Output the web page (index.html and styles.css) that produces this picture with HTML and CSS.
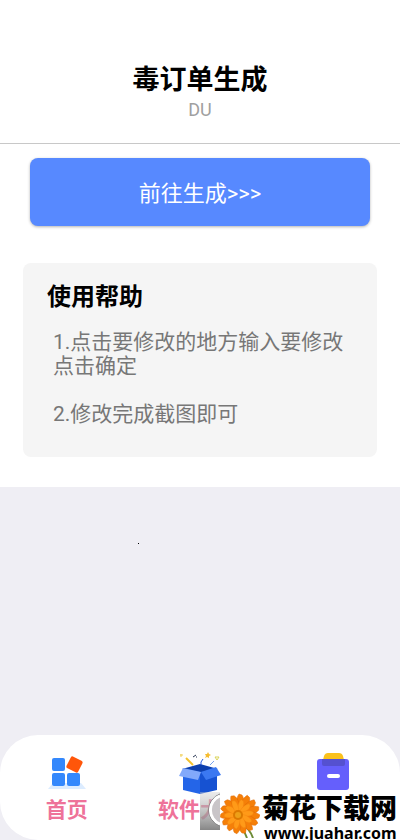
FILE: index.html
```html
<!DOCTYPE html>
<html lang="zh-CN">
<head>
  <meta charset="UTF-8">
  <meta name="viewport" content="width=device-width, initial-scale=1.0">
  <title>毒订单生成</title>
  <link rel="stylesheet" href="styles.css">
</head>
<body>
  <div class="app">
    <header class="header">
      <h1 class="title">毒订单生成</h1>
      <p class="subtitle">DU</p>
    </header>

    <main class="content">
      <button class="go-btn" type="button">前往生成&gt;&gt;&gt;</button>

      <!-- Help card -->
      <section class="help">
        <h2 class="help-title">使用帮助</h2>
        <div class="help-text">
          <p>1.点击要修改的地方输入要修改点击确定</p>
          <p>2.修改完成截图即可</p>
        </div>
      </section>
    </main>

    <div class="filler">
      <span class="dot"></span>
    </div>

    <!-- Tab bar -->
    <nav class="tabbar">
      <a class="tab" href="#home">
        <svg class="tab-icon" viewBox="0 0 44 44" aria-hidden="true">
          <path d="M8 33h28l5 6H3z" fill="#dcecff"/>
          <rect x="7" y="8" width="13" height="13" rx="2" fill="#3488fc"/>
          <rect x="7" y="23" width="13" height="13" rx="2" fill="#3488fc"/>
          <rect x="22" y="23" width="13" height="13" rx="2" fill="#3488fc"/>
          <rect x="23" y="8" width="13" height="13" rx="2" fill="#ff560a" transform="rotate(27 29.5 14.5)"/>
        </svg>
        <span class="tab-label">首页</span>
      </a>
      <a class="tab" href="#apps">
        <svg class="tab-icon" viewBox="0 0 44 44" aria-hidden="true">
          <path d="M4 19L22 14L40 19L22 23z" fill="#0d3fae"/>
          <path d="M5 19L22 22V44L5 40z" fill="#2465e8"/>
          <path d="M22 22L39 19V40L22 44z" fill="#1652d2"/>
          <path d="M5 18L23 22L20 30L1 26z" fill="#82a9fb"/>
          <path d="M23 22L38 17L43 25L28 30z" fill="#3b78f1"/>
          <path d="M8 8l7 7" stroke="#f2c12e" stroke-width="2"/>
          <path d="M2 5h3M3 4v3" stroke="#f0cf58" stroke-width="1"/>
          <path d="M15 7l3-2M18 7h1" stroke="#283552" stroke-width="1"/>
          <path d="M23 15q-1-3 2-6" stroke="#275be0" stroke-width="1" fill="none"/>
          <path d="M32 15l4-4" stroke="#77a2ee" stroke-width="1"/>
          <path d="M30 2l1 2 2 1-2 1v2l-2-1-2 1 1-2-1-2h2z" fill="#f6bd31"/>
          <path d="M37 7l2 3 2-3z" fill="none" stroke="#d9d45b"/>
        </svg>
        <span class="tab-label">软件大全</span>
      </a>
      <a class="tab" href="#mine" aria-label="我的">
        <svg class="tab-icon" viewBox="0 0 44 44" aria-hidden="true">
          <path d="M12 10l1-4q1-3 4-3h11q3 0 4 3l1 4z" fill="#fac11c"/>
          <rect x="6" y="9" width="32" height="31" rx="3" fill="#655ffc"/>
          <path d="M11 9h23v5q0 2-2 2H13q-2 0-2-2z" fill="#5551d0"/>
          <rect x="16" y="24" width="13" height="4" rx="2" fill="#fff"/>
        </svg>
      </a>
    </nav>

    <!-- Site mark over the tab bar -->
    <div class="mark">
      <svg class="mark-shade" viewBox="0 0 20 38" aria-hidden="true">
        <defs>
          <linearGradient id="shade" x1="0" y1="0" x2="0" y2="1">
            <stop offset="0" stop-color="#ccc" stop-opacity=".4"/>
            <stop offset="1" stop-color="#808080" stop-opacity=".95"/>
          </linearGradient>
        </defs>
        <rect width="20" height="38" fill="url(#shade)"/>
        <path d="M20 2A17 17 0 0 0 20 34" fill="#c9c5c8" stroke="#777" stroke-width="1"/>
        <path d="M20 4A15 15 0 0 0 20 32" fill="none" stroke="#fff" stroke-width="3"/>
      </svg>
      <svg class="mark-flower" viewBox="0 0 40 46" aria-hidden="true">
        <path d="M22 32q8 5 11 14M20 32q4 6 7 14" fill="none" stroke="#6d8c37" stroke-width="2"/>
        <defs>
          <path id="petal" d="M20 22C15 15 16 6 19 2L22 3C25 7 24 15 20 22z"/>
        </defs>
        <g fill="#f57f08" stroke="#e06a04" stroke-width=".5">
          <use href="#petal"/>
          <use href="#petal" transform="rotate(24 20 22)"/>
          <use href="#petal" transform="rotate(48 20 22)"/>
          <use href="#petal" transform="rotate(72 20 22)"/>
          <use href="#petal" transform="rotate(96 20 22)"/>
          <use href="#petal" transform="rotate(120 20 22)"/>
          <use href="#petal" transform="rotate(144 20 22)"/>
          <use href="#petal" transform="rotate(168 20 22)"/>
          <use href="#petal" transform="rotate(192 20 22)"/>
          <use href="#petal" transform="rotate(216 20 22)"/>
          <use href="#petal" transform="rotate(240 20 22)"/>
          <use href="#petal" transform="rotate(264 20 22)"/>
          <use href="#petal" transform="rotate(288 20 22)"/>
          <use href="#petal" transform="rotate(312 20 22)"/>
          <use href="#petal" transform="rotate(336 20 22)"/>
        </g>
        <g fill="#ff9a18" stroke="#f0820f" stroke-width=".5" transform="translate(4 6) scale(.74)">
          <use href="#petal" transform="rotate(12 20 22)"/>
          <use href="#petal" transform="rotate(48 20 22)"/>
          <use href="#petal" transform="rotate(84 20 22)"/>
          <use href="#petal" transform="rotate(120 20 22)"/>
          <use href="#petal" transform="rotate(156 20 22)"/>
          <use href="#petal" transform="rotate(192 20 22)"/>
          <use href="#petal" transform="rotate(228 20 22)"/>
          <use href="#petal" transform="rotate(264 20 22)"/>
          <use href="#petal" transform="rotate(300 20 22)"/>
          <use href="#petal" transform="rotate(336 20 22)"/>
        </g>
        <circle cx="18" cy="23" r="5" fill="#dc7900"/>
        <circle cx="18" cy="23" r="3" fill="#eda018"/>
      </svg>
      <div class="mark-text">
        <span class="mark-name">菊花下载网</span>
        <span class="mark-url">www.juahar.com</span>
      </div>
    </div>
  </div>
</body>
</html>
```
FILE: styles.css
```css
* {
  box-sizing: border-box;
}

body {
  margin: 0;
  font-family: Roboto, "Noto Sans CJK SC", sans-serif;
  background-color: #efeef4;
}

h1, h2, p {
  margin: 0;
}

.app {
  position: relative;
  display: flex;
  flex-direction: column;
  min-height: 100vh;
  overflow: hidden;
}

.header {
  padding: 62px 16px 21px;
  text-align: center;
  background-color: #fff;
  border-bottom: 1px solid #c8c8c8;
}

.title {
  font-size: 27px;
  line-height: 36px;
  font-weight: 700;
  color: #000;
}

.subtitle {
  font-size: 18px;
  line-height: 24px;
  color: #a0a0a0;
}

.content {
  display: flex;
  flex-direction: column;
  gap: 37px;
  padding: 14px 23px 30px;
  background-color: #fff;
}

.go-btn {
  height: 68px;
  margin: 0 7px;
  padding: 0 0 3px;
  border: none;
  border-radius: 8px;
  background-color: #5789ff;
  box-shadow: 0 1px 3px rgba(0, 0, 0, 0.3);
  color: #fff;
  font-family: inherit;
  font-size: 22px;
  cursor: pointer;
}

.help {
  padding: 18px 24px 31px;
  border-radius: 8px;
  background-color: #f5f5f5;
}

.help-title {
  font-size: 24px;
  line-height: 32px;
  font-weight: 700;
  color: #000;
}

.help-text {
  display: flex;
  flex-direction: column;
  gap: 24px;
  padding: 17px 0 0 6px;
  font-size: 21px;
  line-height: 24px;
  color: #777;
}

.filler {
  flex: 1;
  padding: 56px 138px;
}

.dot {
  display: block;
  width: 1px;
  height: 1px;
  background-color: #000;
}

.tabbar {
  display: grid;
  grid-template-columns: repeat(3, 1fr);
  height: 105px;
  padding-top: 15px;
  border-radius: 38px;
  background-color: #fff;
}

.tab {
  display: flex;
  flex-direction: column;
  align-items: center;
  gap: 1px;
  color: #ee7299;
  text-decoration: none;
}

.tab-icon {
  width: 44px;
  height: 44px;
}

.tab-label {
  font-size: 21px;
  line-height: 30px;
  font-weight: 700;
}

/* Lies over the right part of the tab bar */
.mark {
  position: absolute;
  right: 0;
  bottom: 0;
  display: flex;
  align-items: flex-start;
  width: 200px;
  height: 48px;
}

.mark-shade {
  width: 20px;
  height: 38px;
}

.mark-flower {
  width: 40px;
  height: 46px;
  background-color: #fff;
}

.mark-text {
  display: flex;
  flex: 1;
  flex-direction: column;
  padding-left: 2px;
  background-color: #fff;
  color: #000;
  white-space: nowrap;
}

.mark-name {
  font-size: 27px;
  line-height: 34px;
  font-weight: 900;
}

.mark-url {
  padding-left: 2px;
  font-family: "Noto Sans", sans-serif;
  font-size: 16px;
  line-height: 14px;
  font-weight: 700;
}
```
